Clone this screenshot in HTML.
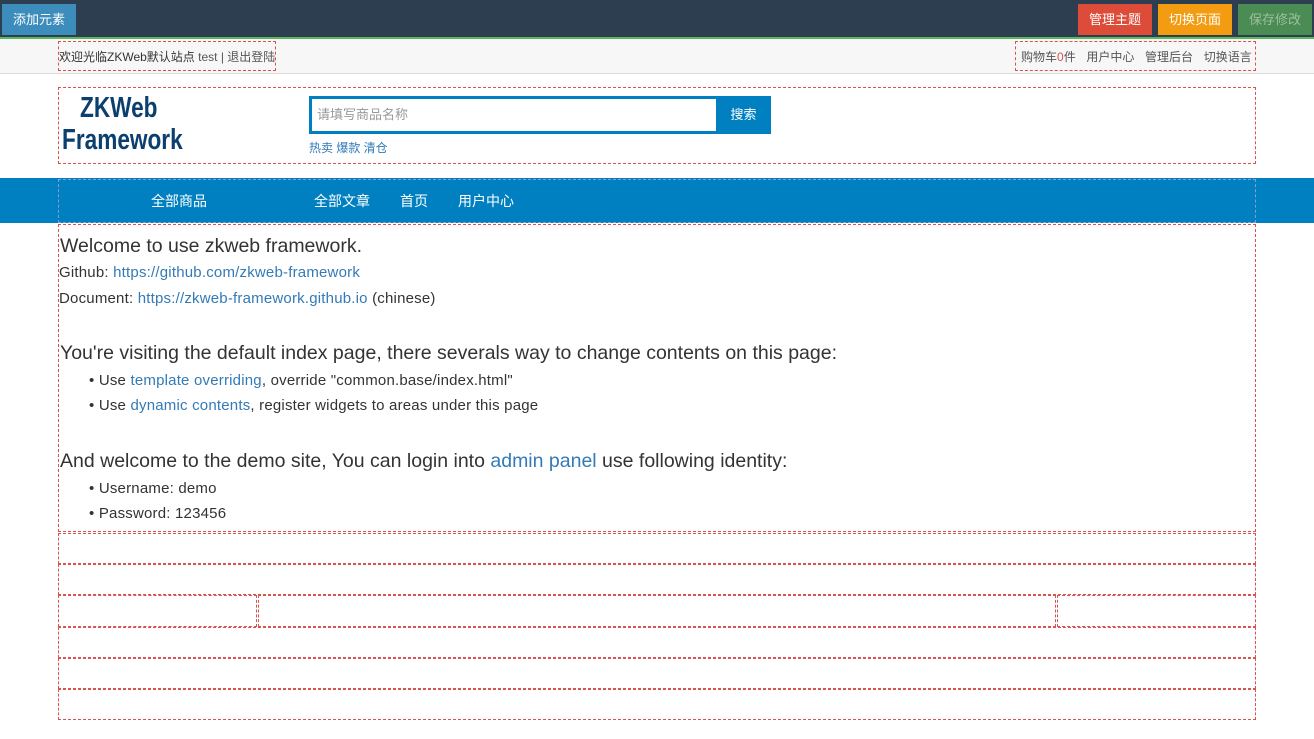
<!DOCTYPE html>
<html><head><meta charset="utf-8"><style>
*{margin:0;padding:0;box-sizing:border-box}
body{width:1314px;height:739px;overflow:hidden;background:#fff;font-family:"Liberation Sans","Noto Sans CJK SC",sans-serif;color:#333;font-size:13px;position:relative}
.a{position:absolute}
.d{position:absolute;border:1px dashed #d9534f}
.top{left:0;top:0;width:1314px;height:39px;background:#2c3e50;border-bottom:2px solid #5cb85c}
.btn{position:absolute;top:4px;height:31px;color:#fff;font-size:13px;line-height:31px;text-align:center}
.hb{left:0;top:39px;width:1314px;height:35px;background:#f7f7f7;border-bottom:1px solid #ddd}
a{color:#337ab7;text-decoration:none}
.nav{left:0;top:178px;width:1314px;height:45px;background:#0080c0}
.nv{position:absolute;top:191px;color:#fff;font-size:14px}
h3{position:absolute;left:60px;font-size:19.5px;font-weight:normal;color:#333;white-space:nowrap}
.l{position:absolute;font-size:15px;color:#333;white-space:nowrap;letter-spacing:0.2px}
</style></head><body>
<div class="a top"></div>
<div class="btn" style="left:2px;width:74px;background:#3c8dbc">添加元素</div>
<div class="btn" style="left:1078px;width:74px;background:#dd4b39">管理主题</div>
<div class="btn" style="left:1158px;width:74px;background:#f39c12">切换页面</div>
<div class="btn" style="left:1238px;width:74px;background:#4a8c53;color:#9cc0a0">保存修改</div>
<div class="a hb"></div>
<div class="d" style="left:58px;top:41px;width:218px;height:30px"></div>
<div class="a" style="left:59px;top:48px;font-size:12px;color:#333;white-space:nowrap">欢迎光临ZKWeb默认站点 <span style="color:#555">test | 退出登陆</span></div>
<div class="d" style="left:1015px;top:41px;width:241px;height:30px"></div>
<div class="a" style="left:1021px;top:48px;font-size:12px;color:#555;white-space:nowrap;word-spacing:2px">购物车<span style="color:#d9534f">0</span>件&nbsp; 用户中心&nbsp; 管理后台&nbsp; 切换语言</div>
<div class="d" style="left:58px;top:87px;width:1198px;height:77px"></div>
<div class="a" style="left:80px;top:91px;font:900 29px/34px 'Liberation Sans',sans-serif;color:#0b3f6e;transform:scaleX(.78);transform-origin:left;white-space:nowrap">ZKWeb</div>
<div class="a" style="left:62px;top:123px;font:900 29px/34px 'Liberation Sans',sans-serif;color:#0b3f6e;transform:scaleX(.78);transform-origin:left;white-space:nowrap">Framework</div>
<div class="a" style="left:309px;top:96px;width:462px;height:38px;background:#0080c0"></div>
<div class="a" style="left:312px;top:99px;width:404px;height:32px;background:#fff;color:#999;font-size:13px;line-height:32px;padding-left:5px">请填写商品名称</div>
<div class="a" style="left:716px;top:99px;width:55px;color:#fff;line-height:32px;text-align:center">搜索</div>
<div class="a" style="left:309px;top:139px;color:#337ab7;font-size:12px">热卖 爆款 清仓</div>
<div class="a nav"></div>
<div class="d" style="left:58px;top:179px;width:1198px;height:44px;border-color:#8a9ccf"></div>
<div class="nv" style="left:151px">全部商品</div>
<div class="nv" style="left:314px">全部文章</div>
<div class="nv" style="left:400px">首页</div>
<div class="nv" style="left:458px">用户中心</div>
<div class="d" style="left:58px;top:224px;width:1198px;height:308px"></div>
<h3 style="top:235px">Welcome to use zkweb framework.</h3>
<div class="l" style="left:59px;top:264px">Github: <a>https://github.com/zkweb-framework</a></div>
<div class="l" style="left:59px;top:290px">Document: <a>https://zkweb-framework.github.io</a> (chinese)</div>
<h3 style="top:342px">You're visiting the default index page, there severals way to change contents on this page:</h3>
<div class="l" style="left:89px;top:372px">• Use <a>template overriding</a>, override "common.base/index.html"</div>
<div class="l" style="left:89px;top:397px">• Use <a>dynamic contents</a>, register widgets to areas under this page</div>
<h3 style="top:450px">And welcome to the demo site, You can login into <a>admin panel</a> use following identity:</h3>
<div class="l" style="left:89px;top:480px">• Username: demo</div>
<div class="l" style="left:89px;top:505px">• Password: 123456</div>
<div class="d" style="left:58px;top:533px;width:1198px;height:31px"></div>
<div class="d" style="left:58px;top:564px;width:1198px;height:31px"></div>
<div class="d" style="left:58px;top:595px;width:199px;height:32px"></div>
<div class="d" style="left:258px;top:595px;width:798px;height:32px"></div>
<div class="d" style="left:1057px;top:595px;width:199px;height:32px"></div>
<div class="d" style="left:58px;top:627px;width:1198px;height:31px"></div>
<div class="d" style="left:58px;top:658px;width:1198px;height:31px"></div>
<div class="d" style="left:58px;top:689px;width:1198px;height:31px"></div>
</body></html>
